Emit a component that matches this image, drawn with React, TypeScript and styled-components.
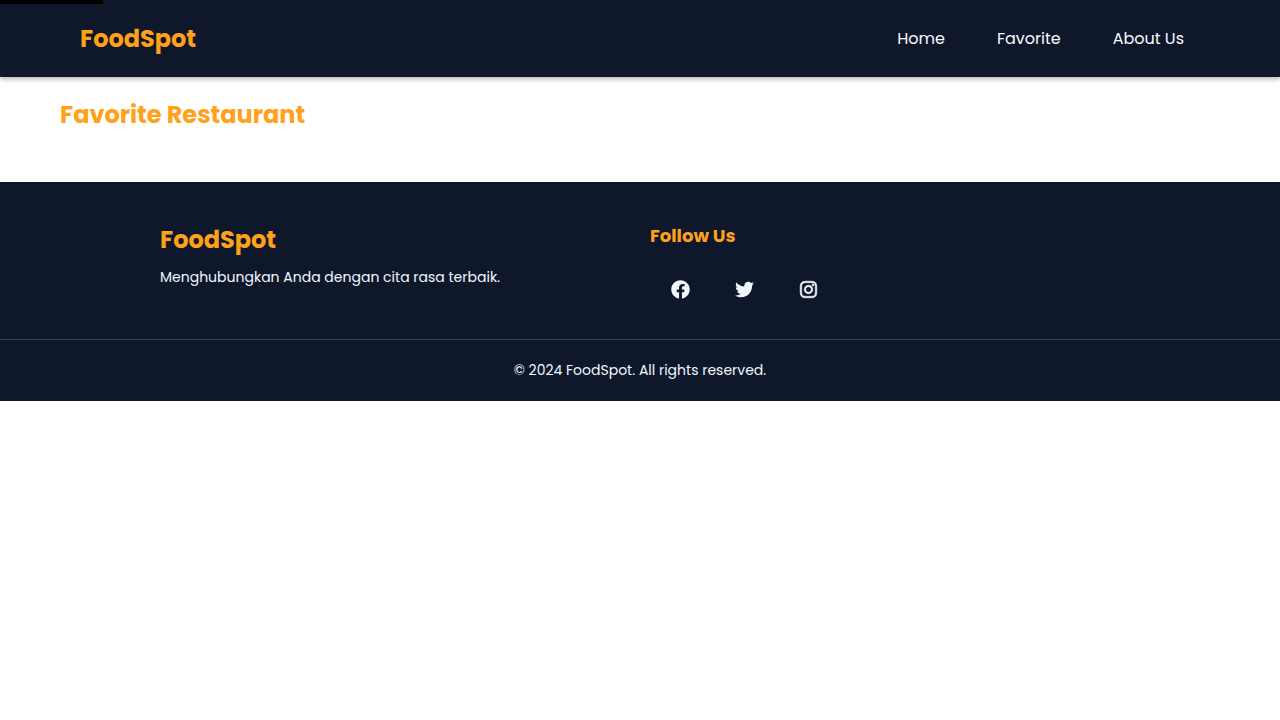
import React from "react";
import styled, { createGlobalStyle } from "styled-components";
import { FaFacebook, FaTwitter, FaInstagram } from "react-icons/fa";

const GlobalStyle = createGlobalStyle`
  *, *::before, *::after { box-sizing: border-box; }
  body {
    margin: 0;
    background: #ffffff;
    font-family: Poppins, Inter, "Liberation Sans", sans-serif;
  }
`;

const Header = styled.header`
  position: relative;
  display: flex;
  align-items: center;
  justify-content: space-between;
  padding: 21px 96px 20px 80px;
  background: #0f172a;
  box-shadow: 0 2px 5px rgba(0, 0, 0, 0.3);
`;

const SkipLink = styled.a`
  position: absolute;
  top: -36px;
  left: 0;
  width: 103px;
  height: 40px;
  background: #000000;
`;

const Brand = styled.h2`
  margin: 0;
  color: #ffa11a;
  font-size: 24px;
  line-height: 36px;
  font-weight: 700;
`;

const NavList = styled.ul`
  display: flex;
  gap: 52px;
  margin: 0;
  padding: 0 0 2px;
  list-style: none;
`;

const NavLink = styled.a`
  color: #f8fafc;
  font-size: 16px;
  line-height: 24px;
  text-decoration: none;
`;

const Main = styled.main`
  padding: 20px 60px 49px;
`;

const Footer = styled.footer`
  background: #0f172a;
  color: #f0f8ff;
  font-size: 14px;
  line-height: 21px;
`;

const FooterColumns = styled.div`
  display: grid;
  grid-template-columns: 1fr 1fr;
  gap: 20px;
  padding: 40px 160px 39px;
`;

const Tagline = styled.p`
  margin: 9px 0 0;
`;

const FollowTitle = styled.h3`
  margin: 0;
  color: #ffa11a;
  font-size: 18px;
  line-height: 27px;
  font-weight: 700;
`;

const SocialList = styled.ul`
  display: flex;
  gap: 45px;
  margin: 29px 0 0;
  padding: 0 21px;
  list-style: none;
`;

const SocialLink = styled.a<{ $stroke: number }>`
  display: flex;
  align-items: center;
  justify-content: center;
  width: 19px;
  height: 22px;
  color: #f0f8ff;
  font-size: 19px;

  svg {
    overflow: visible;
    stroke-width: ${({ $stroke }) => $stroke};
  }
`;

const Copyright = styled.p`
  margin: 0;
  padding: 20px;
  border-top: 1px solid #3f4554;
  text-align: center;
`;

const pages = ["Home", "Favorite", "About Us"];

const socials = [
  { name: "Facebook", Icon: FaFacebook, stroke: 0 },
  { name: "Twitter", Icon: FaTwitter, stroke: 0 },
  { name: "Instagram", Icon: FaInstagram, stroke: 16 },
];

export default function App() {
  return (
    <>
      <GlobalStyle />
      <Header>
        <SkipLink href="#content" aria-label="Skip to content" />
        <Brand as="h1">FoodSpot</Brand>
        <nav>
          <NavList>
            {pages.map((page) => (
              <li key={page}>
                <NavLink href="#">{page}</NavLink>
              </li>
            ))}
          </NavList>
        </nav>
      </Header>
      <Main id="content">
        <Brand>Favorite Restaurant</Brand>
      </Main>
      <Footer>
        <FooterColumns>
          <div>
            <Brand>FoodSpot</Brand>
            <Tagline>Menghubungkan Anda dengan cita rasa terbaik.</Tagline>
          </div>
          <div>
            <FollowTitle>Follow Us</FollowTitle>
            <SocialList>
              {socials.map(({ name, Icon, stroke }) => (
                <li key={name}>
                  <SocialLink href="#" aria-label={name} $stroke={stroke}>
                    <Icon />
                  </SocialLink>
                </li>
              ))}
            </SocialList>
          </div>
        </FooterColumns>
        <Copyright>© 2024 FoodSpot. All rights reserved.</Copyright>
      </Footer>
    </>
  );
}
